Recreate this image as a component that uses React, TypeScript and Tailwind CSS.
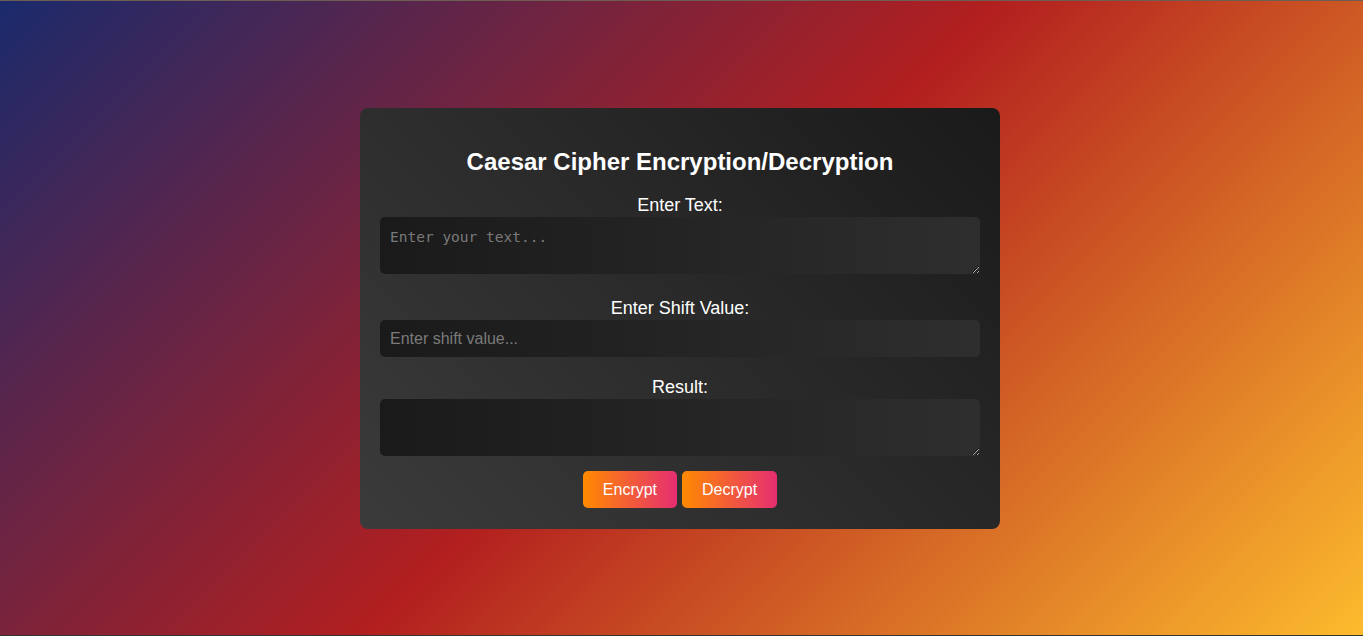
import React, { useState } from 'react';

const shiftText = (text: string, shift: number) =>
  text.replace(/[a-z]/gi, (ch) => {
    const base = ch <= 'Z' ? 65 : 97;
    return String.fromCharCode(((((ch.charCodeAt(0) - base + shift) % 26) + 26) % 26) + base);
  });

const App = () => {
  const [text, setText] = useState('');
  const [shift, setShift] = useState('');
  const [result, setResult] = useState('');

  const run = (dir: number) => setResult(shiftText(text, dir * (parseInt(shift, 10) || 0)));

  return (
    <div className="h-[636px] border-t border-t-[#6e5d52] border-b border-b-[#343434] bg-[linear-gradient(135deg,#1a2a6c,#b21f1f,#fdbb2d)] flex items-start justify-center pt-[107px] pr-[3px] font-['Liberation_Sans',Arial,sans-serif] text-white">
      <div className="w-[640px] rounded-[8px] p-5 pb-[21px] bg-[linear-gradient(45deg,#3b3b3b,#1a1a1a)] text-center">
        {/* Title */}
        <h2 className="text-[24px] leading-[28px] font-bold mt-5 mb-[20px]">Caesar Cipher Encryption/Decryption</h2>

        <label className="block text-[18px] leading-[19px] mb-[2px]">Enter Text:</label>
        <textarea
          value={text}
          onChange={(e) => setText(e.target.value)}
          placeholder="Enter your text..."
          className="block w-full h-[57px] rounded-[5px] px-[10px] py-[10px] text-[14.5px] leading-[20px] font-['DejaVu_Sans_Mono',monospace] text-white placeholder:text-[#7a7a7a] bg-[linear-gradient(90deg,#1a1a1a,#2e2e2e)] outline-none resize-y"
        />

        <label className="block text-[18px] leading-[19px] mt-[25px] mb-[2px]">Enter Shift Value:</label>
        <input
          value={shift}
          onChange={(e) => setShift(e.target.value)}
          placeholder="Enter shift value..."
          className="block w-full h-[37px] rounded-[5px] px-[10px] text-[16px] text-white placeholder:text-[#7a7a7a] bg-[linear-gradient(90deg,#1a1a1a,#2e2e2e)] outline-none"
        />

        <label className="block text-[18px] leading-[19px] mt-[21px] mb-[2px]">Result:</label>
        <textarea
          value={result}
          readOnly
          className="block w-full h-[57px] rounded-[5px] px-[10px] py-[10px] text-[14.5px] leading-[20px] font-['DejaVu_Sans_Mono',monospace] text-white bg-[linear-gradient(90deg,#1a1a1a,#2e2e2e)] outline-none resize-y"
        />

        <div className="flex justify-center gap-[5px] mt-[15px]">
          <button
            onClick={() => run(1)}
            className="h-[37px] px-5 rounded-[5px] text-[16px] text-white bg-[linear-gradient(90deg,#ff8a00,#e52e71)]"
          >
            Encrypt
          </button>
          <button
            onClick={() => run(-1)}
            className="h-[37px] px-5 rounded-[5px] text-[16px] text-white bg-[linear-gradient(90deg,#ff8a00,#e52e71)]"
          >
            Decrypt
          </button>
        </div>
      </div>
    </div>
  );
};

export default App;
